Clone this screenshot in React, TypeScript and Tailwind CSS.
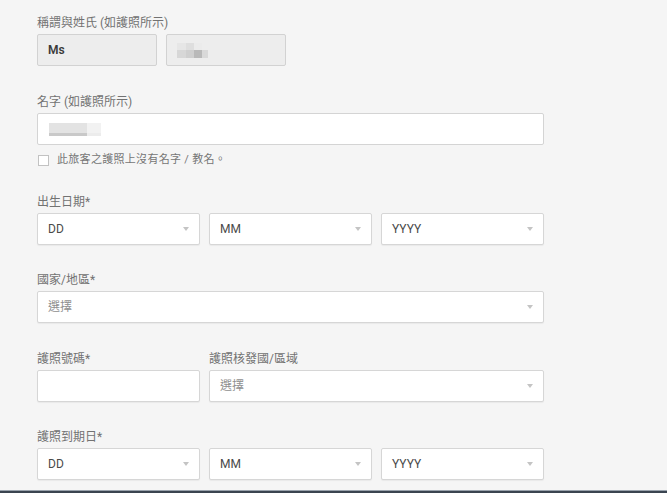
import React from "react";

const font = { fontFamily: 'Roboto, "Noto Sans CJK TC", sans-serif' };

function Label({ children, className = "" }: { children: React.ReactNode; className?: string }) {
  return (
    <div className={`h-[16px] leading-[16px] text-[12px] text-[#727272] mb-[3px] whitespace-nowrap ${className}`}>
      {children}
    </div>
  );
}

function Arrow() {
  return (
    <svg width="6" height="4" viewBox="0 0 6 4" className="shrink-0">
      <path d="M0 0 L6 0 L3 4 Z" fill="#c4c4c4" />
    </svg>
  );
}

function Select({ text, muted = false, className = "" }: { text: string; muted?: boolean; className?: string }) {
  return (
    <div
      className={`h-[32px] bg-white border border-[#d6d6d6] rounded-[2px] shadow-[0_1px_1px_rgba(0,0,0,0.05)] flex items-center justify-between pl-[10px] pr-[10px] ${className}`}
    >
      <span className={`text-[12px] ${muted ? "text-[#8f8f8f]" : "text-[#4a4a4a]"}`}>{text}</span>
      <Arrow />
    </div>
  );
}

function Pix() {
  return (
    <div className="flex flex-col">
      <div className="flex">
        <div className="w-[9px] h-[7px] bg-[#e6e6e6]" />
        <div className="w-[8px] h-[7px] bg-[#dedede]" />
        <div className="w-[8px] h-[7px] bg-[#ebebeb]" />
      </div>
      <div className="flex">
        <div className="w-[9px] h-[8px] bg-[#d7d7d7]" />
        <div className="w-[8px] h-[8px] bg-[#cfcfcf]" />
        <div className="w-[8px] h-[8px] bg-[#b9b9b9]" />
        <div className="w-[6px] h-[8px] bg-[#d9d9d9]" />
      </div>
    </div>
  );
}

export default function App() {
  return (
    <div className="w-[667px] h-[493px] bg-[#f5f5f5] flex flex-col overflow-hidden" style={font}>
      <div className="flex-1 pl-[37px] pt-[15px] w-[544px] box-content">
        {/* Title / surname */}
        <Label>稱謂與姓氏 (如護照所示)</Label>
        <div className="flex gap-[9px]">
          <div className="w-[120px] h-[32px] bg-[#ededed] border border-[#d2d2d2] rounded-[2px] flex items-center pl-[10px]">
            <span className="text-[12px] font-semibold text-[#3a3a3a]">Ms</span>
          </div>
          <div className="w-[120px] h-[32px] bg-[#ededed] border border-[#d2d2d2] rounded-[2px] flex items-center pl-[10px]">
            <Pix />
          </div>
        </div>

        {/* Given name */}
        <Label className="mt-[28px]">名字 (如護照所示)</Label>
        <div className="w-[507px] h-[32px] bg-white border border-[#d4d4d4] rounded-[2px] flex items-center pl-[11px]">
          <div className="flex flex-col">
            <div className="flex">
              <div className="w-[38px] h-[10px] bg-[#e3e3e3]" />
              <div className="w-[14px] h-[10px] bg-[#f2f2f2]" />
            </div>
            <div className="flex">
              <div className="w-[38px] h-[3px] bg-[#c9c9c9]" />
              <div className="w-[14px] h-[3px] bg-[#ececec]" />
            </div>
          </div>
        </div>

        {/* Checkbox */}
        <div className="mt-[9px] flex items-center h-[12px]">
          <div className="w-[11px] h-[11px] bg-white border border-[#c2c2c2] ml-[1px]" />
          <span className="ml-[8px] text-[11px] text-[#757575] leading-[12px] tracking-[0.3px]">此旅客之護照上沒有名字 / 教名。</span>
        </div>

        {/* DOB */}
        <Label className="mt-[28px]">出生日期*</Label>
        <div className="flex gap-[9px] w-[507px]">
          <Select text="DD" className="w-[163px]" />
          <Select text="MM" className="w-[163px]" />
          <Select text="YYYY" className="w-[163px]" />
        </div>

        {/* Country */}
        <Label className="mt-[27px]">國家/地區*</Label>
        <Select text="選擇" muted className="w-[507px]" />

        {/* Passport */}
        <div className="mt-[28px] flex gap-[9px] w-[507px]">
          <div className="w-[163px] shrink-0">
            <Label>護照號碼*</Label>
            <div className="h-[32px] bg-white border border-[#d6d6d6] rounded-[2px] shadow-[0_1px_1px_rgba(0,0,0,0.05)]" />
          </div>
          <div className="flex-1">
            <Label>護照核發國/區域</Label>
            <Select text="選擇" muted />
          </div>
        </div>

        {/* Expiry */}
        <Label className="mt-[27px]">護照到期日*</Label>
        <div className="flex gap-[9px] w-[507px]">
          <Select text="DD" className="w-[163px]" />
          <Select text="MM" className="w-[163px]" />
          <Select text="YYYY" className="w-[163px]" />
        </div>
      </div>
      <div className="h-[1px] bg-[#9aa3ad]" />
      <div className="h-[2px] bg-[#3a4450]" />
    </div>
  );
}
